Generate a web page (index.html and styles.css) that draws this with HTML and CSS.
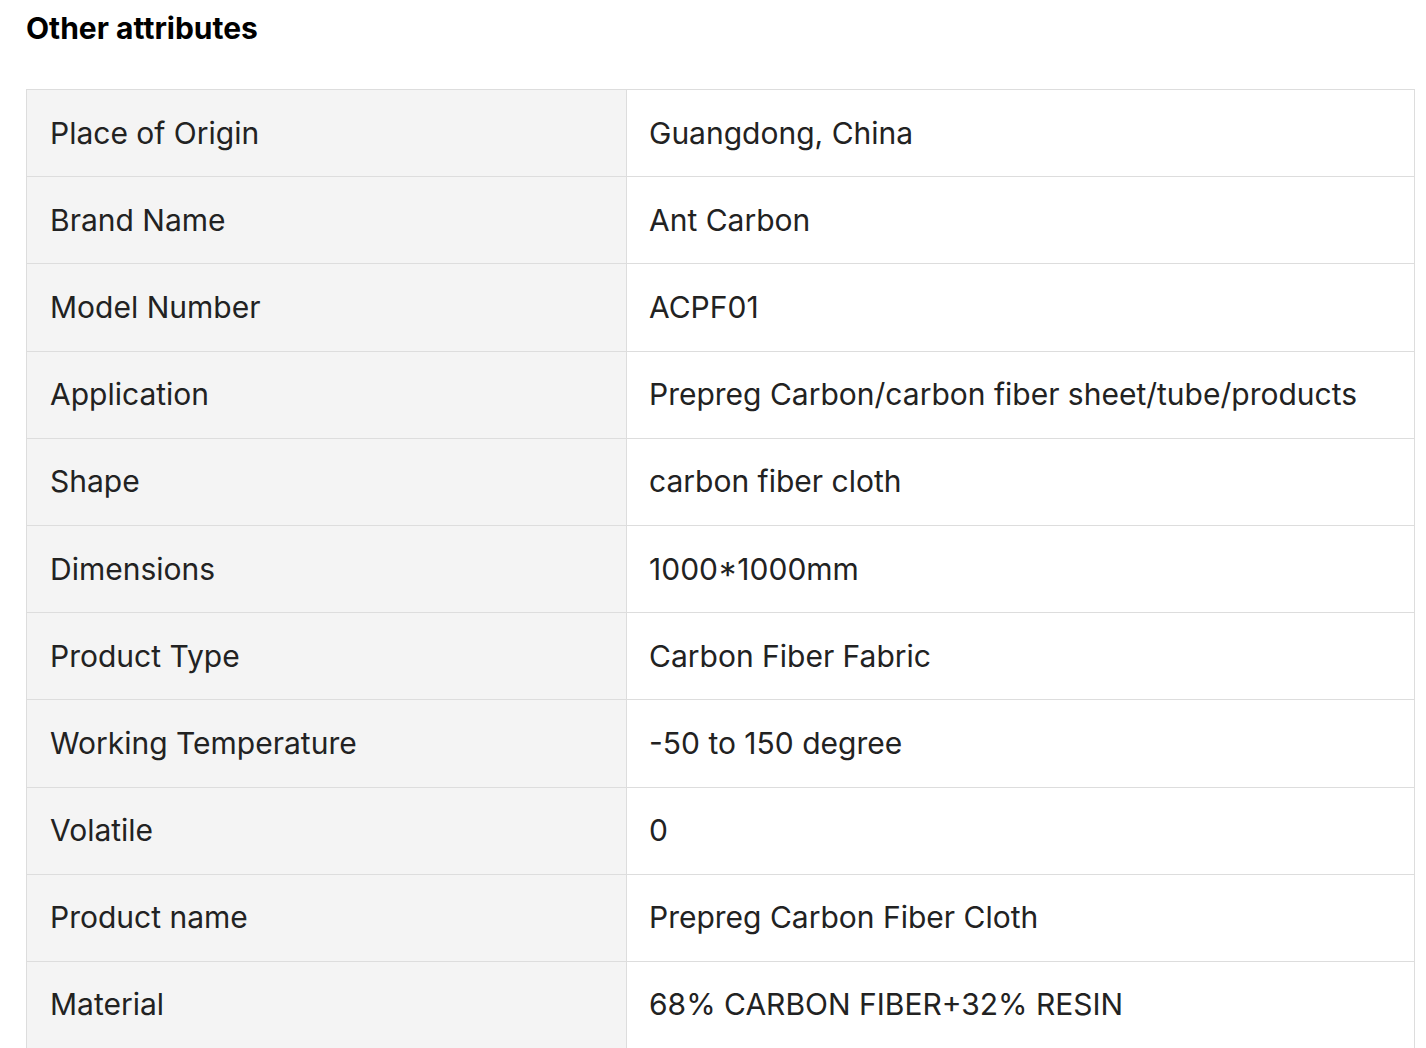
FILE: index.html
```html
<!DOCTYPE html>
<html>
<head>
<meta charset="utf-8">
<link rel="stylesheet" href="styles.css">
</head>
<body>
<div class="page">
  <h2 class="title">Other attributes</h2>
  <table class="attrs">
    <tbody>
      <tr><td class="label">Place of Origin</td><td class="value">Guangdong, China</td></tr>
      <tr><td class="label">Brand Name</td><td class="value">Ant Carbon</td></tr>
      <tr><td class="label">Model Number</td><td class="value">ACPF01</td></tr>
      <tr><td class="label">Application</td><td class="value">Prepreg Carbon/carbon fiber sheet/tube/products</td></tr>
      <tr><td class="label">Shape</td><td class="value">carbon fiber cloth</td></tr>
      <tr><td class="label">Dimensions</td><td class="value">1000*1000mm</td></tr>
      <tr><td class="label">Product Type</td><td class="value">Carbon Fiber Fabric</td></tr>
      <tr><td class="label">Working Temperature</td><td class="value">-50 to 150 degree</td></tr>
      <tr><td class="label">Volatile</td><td class="value">0</td></tr>
      <tr><td class="label">Product name</td><td class="value">Prepreg Carbon Fiber Cloth</td></tr>
      <tr><td class="label">Material</td><td class="value">68% CARBON FIBER+32% RESIN</td></tr>
    </tbody>
  </table>
</div>
</body>
</html>
```
FILE: styles.css
```css
html, body {
  margin: 0;
  padding: 0;
  background: #ffffff;
}
body {
  font-family: Inter, "Noto Sans", "Liberation Sans", sans-serif;
  color: #222222;
}
.page {
  padding: 10px 12px 0 26px;
}
.title {
  margin: 0 0 43px 0;
  font-size: 30px;
  line-height: 36px;
  font-weight: 700;
  color: #000000;
}
.attrs {
  width: 1389px;
  border-collapse: collapse;
  table-layout: fixed;
}
.attrs td {
  border: 1px solid #dddddd;
  padding: 24.6px 22px 25.6px 23px;
  font-size: 30px;
  line-height: 36px;
  vertical-align: middle;
  white-space: nowrap;
}
.attrs .label {
  width: 554px;
  background: #f4f4f4;
  color: #222222;
}
.attrs .value {
  padding-left: 22px;
  background: #ffffff;
  color: #222222;
}
```
